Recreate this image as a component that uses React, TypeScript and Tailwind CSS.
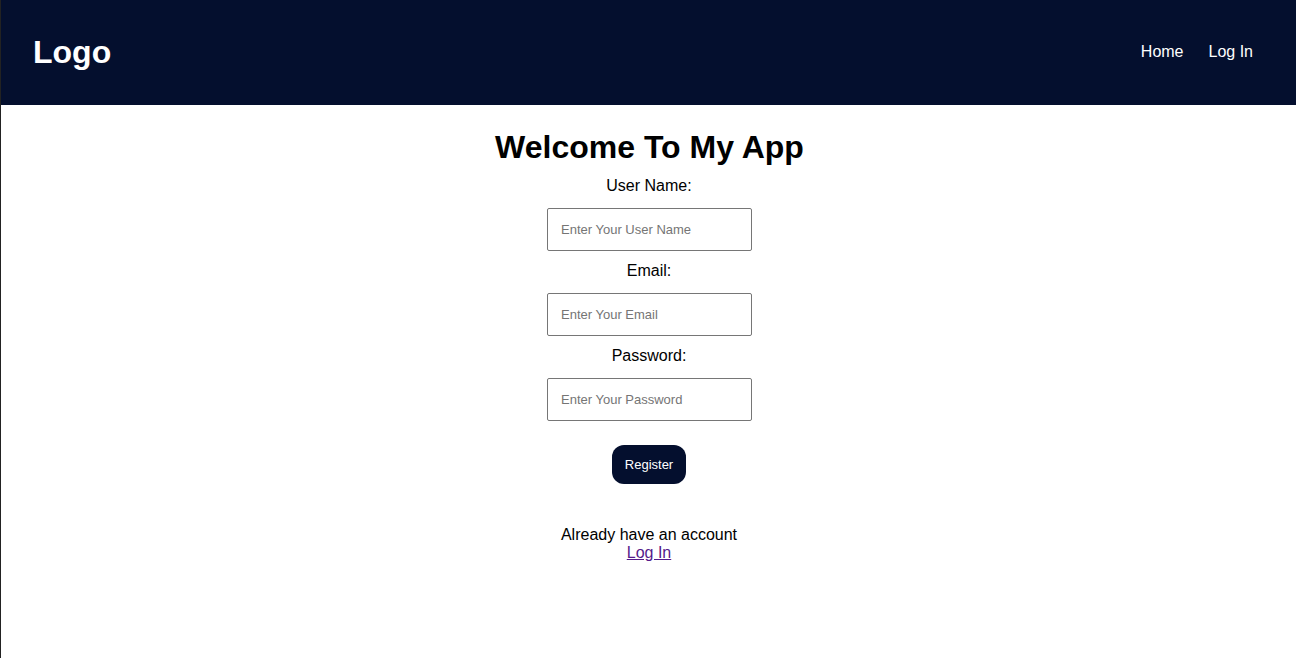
import { useState } from "react";

function Field({
  label,
  placeholder,
  type = "text",
}: {
  label: string;
  placeholder: string;
  type?: string;
}) {
  const [value, setValue] = useState("");
  return (
    <div className="flex flex-col items-center">
      <label className="mr-[1px] mt-[10px] pt-[1px] text-[16px] leading-[18px] text-black">
        {label}
      </label>
      <input
        type={type}
        value={value}
        onChange={(e) => setValue(e.target.value)}
        placeholder={placeholder}
        className="mt-[13px] h-[43px] w-[205px] rounded-[2px] border border-[#767676] bg-white px-[13px] text-[13px] text-black outline-none placeholder:text-[#757575]"
      />
    </div>
  );
}

export default function App() {
  return (
    <div
      className="min-h-[658px] border-l border-[#222] bg-white"
      style={{ fontFamily: '"Liberation Sans", Arial, sans-serif' }}
    >
      {/* Header */}
      <header className="flex h-[105px] items-center justify-between bg-[#040f2e] pb-[2px] pl-[32px] pr-[43px]">
        <a href="#" className="text-[32px] font-bold leading-none text-white">
          Logo
        </a>
        <nav className="flex items-center gap-[25px] text-[16px] text-white">
          <a href="#">Home</a>
          <a href="#">Log In</a>
        </nav>
      </header>

      {/* Register form */}
      <main className="flex flex-col items-center pl-[2px]">
        <h1 className="mt-[24px] text-[32px] font-bold leading-[37px] text-black">
          Welcome To My App
        </h1>
        <form className="flex flex-col items-center" onSubmit={(e) => e.preventDefault()}>
          <Field label="User Name:" placeholder="Enter Your User Name" />
          <Field label="Email:" placeholder="Enter Your Email" type="email" />
          <Field label="Password:" placeholder="Enter Your Password" type="password" />
          <button
            type="submit"
            className="mr-[1px] mt-[24px] h-[39px] w-[74px] rounded-[12px] bg-[#040f2e] text-[13px] text-white"
          >
            Register
          </button>
        </form>
        <p className="mr-[1px] mt-[42px] text-[16px] leading-[18px] text-black">
          Already have an account
        </p>
        <a href="#" className="mr-[1px] text-[16px] leading-[18px] text-[#551a8b] underline">
          Log In
        </a>
      </main>
    </div>
  );
}
